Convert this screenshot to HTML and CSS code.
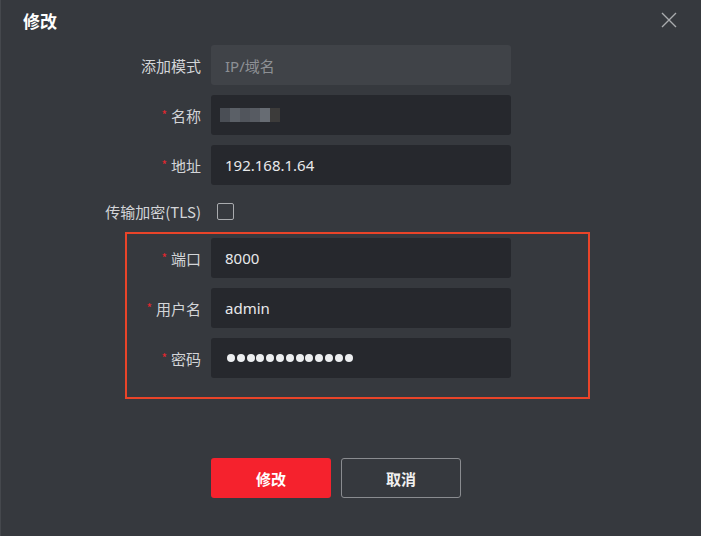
FILE: index.html
```html
<!DOCTYPE html>
<html lang="zh-CN">
<head>
<meta charset="utf-8">
<title>修改</title>
<link rel="stylesheet" href="styles.css">
</head>
<body>
<div class="dialog">
  <div class="header">
    <div class="title">修改</div>
    <svg class="close" width="16" height="16" viewBox="0 0 16 16"><path d="M1 1L15 15M15 1L1 15" stroke="#a9abae" stroke-width="1.4" fill="none"/></svg>
  </div>
  <div class="form">
    <div class="row">
      <div class="label">添加模式</div>
      <div class="input disabled">IP/域名</div>
    </div>
    <div class="row">
      <div class="label"><span class="req">*</span>名称</div>
      <div class="input"><span class="mosaic"><i class="m1"></i><i class="m2"></i><i class="m3"></i><i class="m4"></i><i class="m5"></i><i class="m6"></i></span></div>
    </div>
    <div class="row">
      <div class="label"><span class="req">*</span>地址</div>
      <div class="input">192.168.1.64</div>
    </div>
    <div class="row tls">
      <div class="label">传输加密(TLS)</div>
      <div class="check"></div>
    </div>
    <div class="highlight">
      <div class="row">
        <div class="label narrow"><span class="req">*</span>端口</div>
        <div class="input">8000</div>
      </div>
      <div class="row">
        <div class="label narrow"><span class="req">*</span>用户名</div>
        <div class="input">admin</div>
      </div>
      <div class="row">
        <div class="label narrow"><span class="req">*</span>密码</div>
        <div class="input"><span class="dots"><i></i><i></i><i></i><i></i><i></i><i></i><i></i><i></i><i></i><i></i><i></i><i></i><i></i></span></div>
      </div>
    </div>
    <div class="actions">
      <button class="btn primary">修改</button>
      <button class="btn ghost">取消</button>
    </div>
  </div>
</div>
</body>
</html>
```
FILE: styles.css
```css
html, body {
  margin: 0;
  padding: 0;
  background: #36393e;
}
body {
  font-family: "Noto Sans", "Noto Sans CJK SC", sans-serif;
  color: #d3d5d8;
}
.dialog {
  width: 701px;
  height: 536px;
  box-sizing: border-box;
  border-left: 1px solid #45484d;
  background: #36393e;
}
.header {
  height: 45px;
  display: flex;
  justify-content: space-between;
  align-items: flex-start;
  padding: 0 24px 0 22px;
  box-sizing: border-box;
}
.title {
  font-family: "Noto Sans CJK SC", sans-serif;
  font-size: 17px;
  font-weight: 700;
  color: #ffffff;
  margin-top: 8px;
  line-height: 26px;
}
.close {
  margin-top: 12px;
}
.form {
  display: flex;
  flex-direction: column;
  gap: 10px;
}
.row {
  display: flex;
  align-items: center;
  gap: 10px;
  height: 40px;
}
.label {
  width: 200px;
  text-align: right;
  font-family: "Noto Sans CJK SC", sans-serif;
  font-size: 15px;
  color: #d3d5d8;
  white-space: nowrap;
}
.label.narrow {
  width: 74px;
}
.req {
  color: #e5262e;
  font-size: 12px;
  margin-right: 4px;
  position: relative;
  top: -2px;
}
.input {
  width: 300px;
  height: 40px;
  box-sizing: border-box;
  background: #26282d;
  border-radius: 3px;
  padding-left: 14px;
  display: flex;
  align-items: center;
  font-size: 15px;
  color: #e8e9eb;
}
.input.disabled {
  background: #404348;
  color: #8d9095;
  font-family: "Noto Sans", "Noto Sans CJK SC", sans-serif;
}
.mosaic {
  display: flex;
  margin-left: -5px;
}
.mosaic i {
  display: block;
  width: 10px;
  height: 14px;
}
.mosaic .m1 { background: #4a4e55; }
.mosaic .m2 { background: #5b6067; }
.mosaic .m3 { background: #51555c; }
.mosaic .m4 { background: #575b62; }
.mosaic .m5 { background: #676c73; }
.mosaic .m6 { background: #3c3b3a; }
.row.tls {
  height: 33px;
}
.check {
  width: 15px;
  height: 15px;
  border: 1.5px solid #a9abae;
  border-radius: 2px;
  margin-left: 6px;
  margin-top: -1px;
}
.highlight {
  margin-left: 124px;
  width: 465px;
  box-sizing: border-box;
  border: 2px solid #ea4429;
  padding: 4px 0 19px 0;
  margin-top: -6px;
  display: flex;
  flex-direction: column;
  gap: 10px;
}
.dots {
  display: flex;
  gap: 1.8px;
  margin-left: 2px;
}
.dots i {
  display: block;
  width: 8px;
  height: 8px;
  border-radius: 50%;
  background: #eceef0;
}
.actions {
  display: flex;
  gap: 10px;
  margin-left: 210px;
  margin-top: 49px;
}
.btn {
  width: 120px;
  height: 40px;
  border-radius: 3px;
  font-family: "Noto Sans CJK SC", sans-serif;
  font-size: 15px;
  font-weight: 700;
  color: #ffffff;
  cursor: pointer;
  padding: 0;
}
.btn.primary {
  background: #f5222d;
  border: none;
}
.btn.ghost {
  background: transparent;
  border: 1.5px solid #8a8c90;
  color: #f0f0f0;
}
```
